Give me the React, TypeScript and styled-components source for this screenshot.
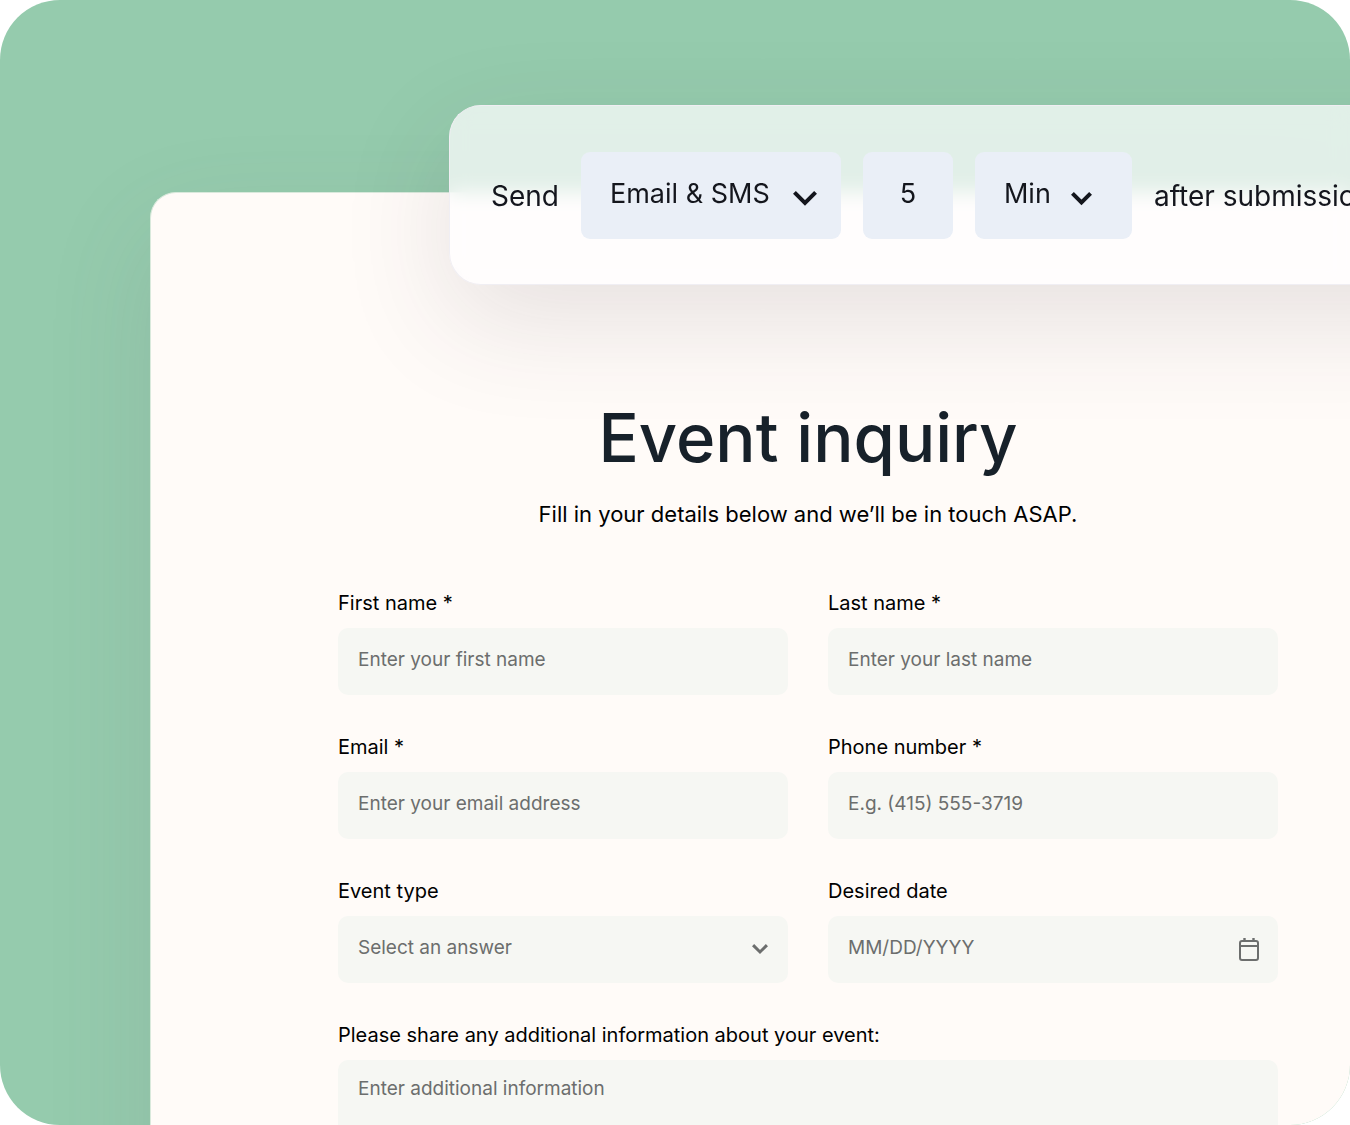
import React from 'react';
import styled, { createGlobalStyle } from 'styled-components';

const ink = '#14161d';
const muted = '#6c6e6d';

const GlobalStyle = createGlobalStyle`
  *, *::before, *::after { box-sizing: border-box; }
  body {
    margin: 0;
    background: #fff;
    font-family: Inter, "Liberation Sans", sans-serif;
  }
  input, select, textarea, button { font: inherit; color: inherit; }
`;

const Stage = styled.main`
  position: relative;
  height: 100vh;
  padding: 192px 0 0 150px;
  overflow: hidden;
  border-radius: 60px;
  background: #95cbad;
`;

const Card = styled.section`
  min-height: 100%;
  padding: 205px 72px 60px 187px;
  border: solid #d9e9dc;
  border-width: 1px 0 0 1px;
  border-radius: 26px 0 0 0;
  background: #fffbf8;
  box-shadow: 0 40px 110px rgba(100, 80, 110, 0.12);
`;

const Title = styled.h1`
  margin: 0;
  color: #17212a;
  font-size: 67px;
  font-weight: 500;
  line-height: 80px;
  text-align: center;
`;

const Subtitle = styled.p`
  margin: 20px 0 61px;
  color: #000;
  font-size: 22px;
  line-height: 32px;
  text-align: center;
`;

const Form = styled.form`
  display: grid;
  grid-template-columns: 1fr 1fr;
  gap: 40px;
`;

const Field = styled.div<{ $wide?: boolean }>`
  display: grid;
  gap: 13px;
  grid-column: ${(p) => (p.$wide ? '1 / -1' : 'auto')};
`;

const Label = styled.label`
  color: #000;
  font-size: 20px;
  line-height: 24px;
`;

const Stack = styled.div<{ $inset?: number }>`
  display: grid;
  align-items: center;

  > * { grid-area: 1 / 1; }
  > :last-child:not(:first-child) {
    justify-self: end;
    margin-right: ${(p) => p.$inset ?? 20}px;
  }
  > svg { pointer-events: none; }
`;

const fieldBox = `
  display: block;
  width: 100%;
  margin: 0;
  border: 0;
  border-radius: 10px;
  outline: 0;
  appearance: none;
  background: #f6f7f3;
  color: ${muted};
  font-size: 19px;
  line-height: 24px;
  &::placeholder { color: ${muted}; opacity: 1; }
`;

const TextInput = styled.input`
  ${fieldBox}
  height: 67px;
  padding: 0 20px 4px;
`;

const SelectInput = styled.select`
  ${fieldBox}
  height: 67px;
  padding: 0 48px 4px 20px;
`;

const TextArea = styled.textarea`
  ${fieldBox}
  height: 134px;
  padding: 17px 20px;
  resize: none;
`;

const IconButton = styled.button`
  display: grid;
  padding: 0;
  border: 0;
  background: none;
  color: ${muted};
  cursor: pointer;
`;

const Toolbar = styled.div`
  position: absolute;
  top: 105px;
  right: 0;
  left: 449px;
  display: flex;
  align-items: center;
  gap: 22px;
  padding: 46px 0 45px 41px;
  overflow: hidden;
  border: solid #f0eef3;
  border-width: 1px 0 1px 1px;
  border-radius: 32px 0 0 32px;
  background: rgba(255, 254, 255, 0.72);
  backdrop-filter: blur(10px);
`;

const ToolbarShadow = styled.div`
  position: absolute;
  top: 105px;
  right: -150px;
  left: 449px;
  height: 179px;
  border-radius: 32px;
  box-shadow: 0 36px 110px rgba(60, 45, 60, 0.13);
  clip-path: polygon(
    evenodd,
    -200px -200px, 120% -200px, 120% 400px, -200px 400px, -200px -200px,
    0 32px, 10px 10px, 32px 0, 100% 0, 100% 100%, 32px 100%, 10px 169px, 0 147px, 0 32px
  );
`;

const ToolbarText = styled.span`
  flex: none;
  color: ${ink};
  font-size: 28px;
  line-height: 40px;
  white-space: nowrap;
`;

const chipBox = `
  height: 87px;
  margin: 0;
  border: 0;
  border-radius: 9px;
  outline: 0;
  appearance: none;
  background: #eaeff7;
  color: ${ink};
  font-size: 27px;
  line-height: 36px;
`;

const Chip = styled(Stack)`
  flex: none;
`;

const ChipSelect = styled.select<{ $width: number }>`
  ${chipBox}
  width: ${(p) => p.$width}px;
  padding: 0 0 4px 29px;
`;

const ChipInput = styled.input`
  ${chipBox}
  flex: none;
  width: 90px;
  padding: 0 0 4px;
  text-align: center;
`;

type ChevronProps = { width: number; stroke: number; color: string; drop: number };

const Chevron = ({ width, stroke, color, drop }: ChevronProps) => {
  const height = width / 2 + stroke + drop;
  const inset = stroke * 0.36;
  return (
    <svg width={width} height={height} viewBox={`0 ${-drop} ${width} ${height}`} fill="none" aria-hidden="true">
      <path
        d={`M${inset} ${inset}L${width / 2} ${width / 2}L${width - inset} ${inset}`}
        stroke={color}
        strokeWidth={stroke}
      />
    </svg>
  );
};

const CalendarIcon = () => (
  <svg width="22" height="26" viewBox="0 0 22 26" fill="none" stroke="currentColor" aria-hidden="true">
    <rect x="2" y="4" width="18" height="19" rx="2" strokeWidth="2" />
    <path d="M2 9H20" strokeWidth="2" />
    <path d="M6.5 1V4M15.5 1V4" strokeWidth="2.4" />
  </svg>
);

type Entry = { id: string; label: string; placeholder: string; type: string };

const contactFields: Entry[] = [
  { id: 'first-name', label: 'First name *', placeholder: 'Enter your first name', type: 'text' },
  { id: 'last-name', label: 'Last name *', placeholder: 'Enter your last name', type: 'text' },
  { id: 'email', label: 'Email *', placeholder: 'Enter your email address', type: 'email' },
  { id: 'phone', label: 'Phone number *', placeholder: 'E.g. (415) 555-3719', type: 'tel' },
];

export default function App() {
  return (
    <>
      <GlobalStyle />
      <Stage>
        <Card>
          <Title>Event inquiry</Title>
          <Subtitle>Fill in your details below and we’ll be in touch ASAP.</Subtitle>
          <Form>
            {contactFields.map((f) => (
              <Field key={f.id}>
                <Label htmlFor={f.id}>{f.label}</Label>
                <TextInput id={f.id} type={f.type} placeholder={f.placeholder} />
              </Field>
            ))}
            <Field>
              <Label htmlFor="event-type">Event type</Label>
              <Stack>
                <SelectInput id="event-type">
                  <option>Select an answer</option>
                </SelectInput>
                <Chevron width={16} stroke={3} color={muted} drop={0} />
              </Stack>
            </Field>
            <Field>
              <Label htmlFor="date">Desired date</Label>
              <Stack $inset={18}>
                <TextInput id="date" type="text" placeholder="MM/DD/YYYY" />
                <IconButton type="button" aria-label="Choose a date">
                  <CalendarIcon />
                </IconButton>
              </Stack>
            </Field>
            <Field $wide>
              <Label htmlFor="info">Please share any additional information about your event:</Label>
              <TextArea id="info" placeholder="Enter additional information" />
            </Field>
          </Form>
        </Card>
        <ToolbarShadow />
        <Toolbar>
          <ToolbarText>Send</ToolbarText>
          <Chip $inset={24}>
            <ChipSelect $width={260} aria-label="Channel">
              <option>Email &amp; SMS</option>
            </ChipSelect>
            <Chevron width={24} stroke={4} color={ink} drop={6} />
          </Chip>
          <ChipInput type="text" defaultValue="5" aria-label="Delay" />
          <Chip $inset={40}>
            <ChipSelect $width={157} aria-label="Unit">
              <option>Min</option>
            </ChipSelect>
            <Chevron width={21} stroke={4} color={ink} drop={7} />
          </Chip>
          <ToolbarText>after submission</ToolbarText>
        </Toolbar>
      </Stage>
    </>
  );
}
